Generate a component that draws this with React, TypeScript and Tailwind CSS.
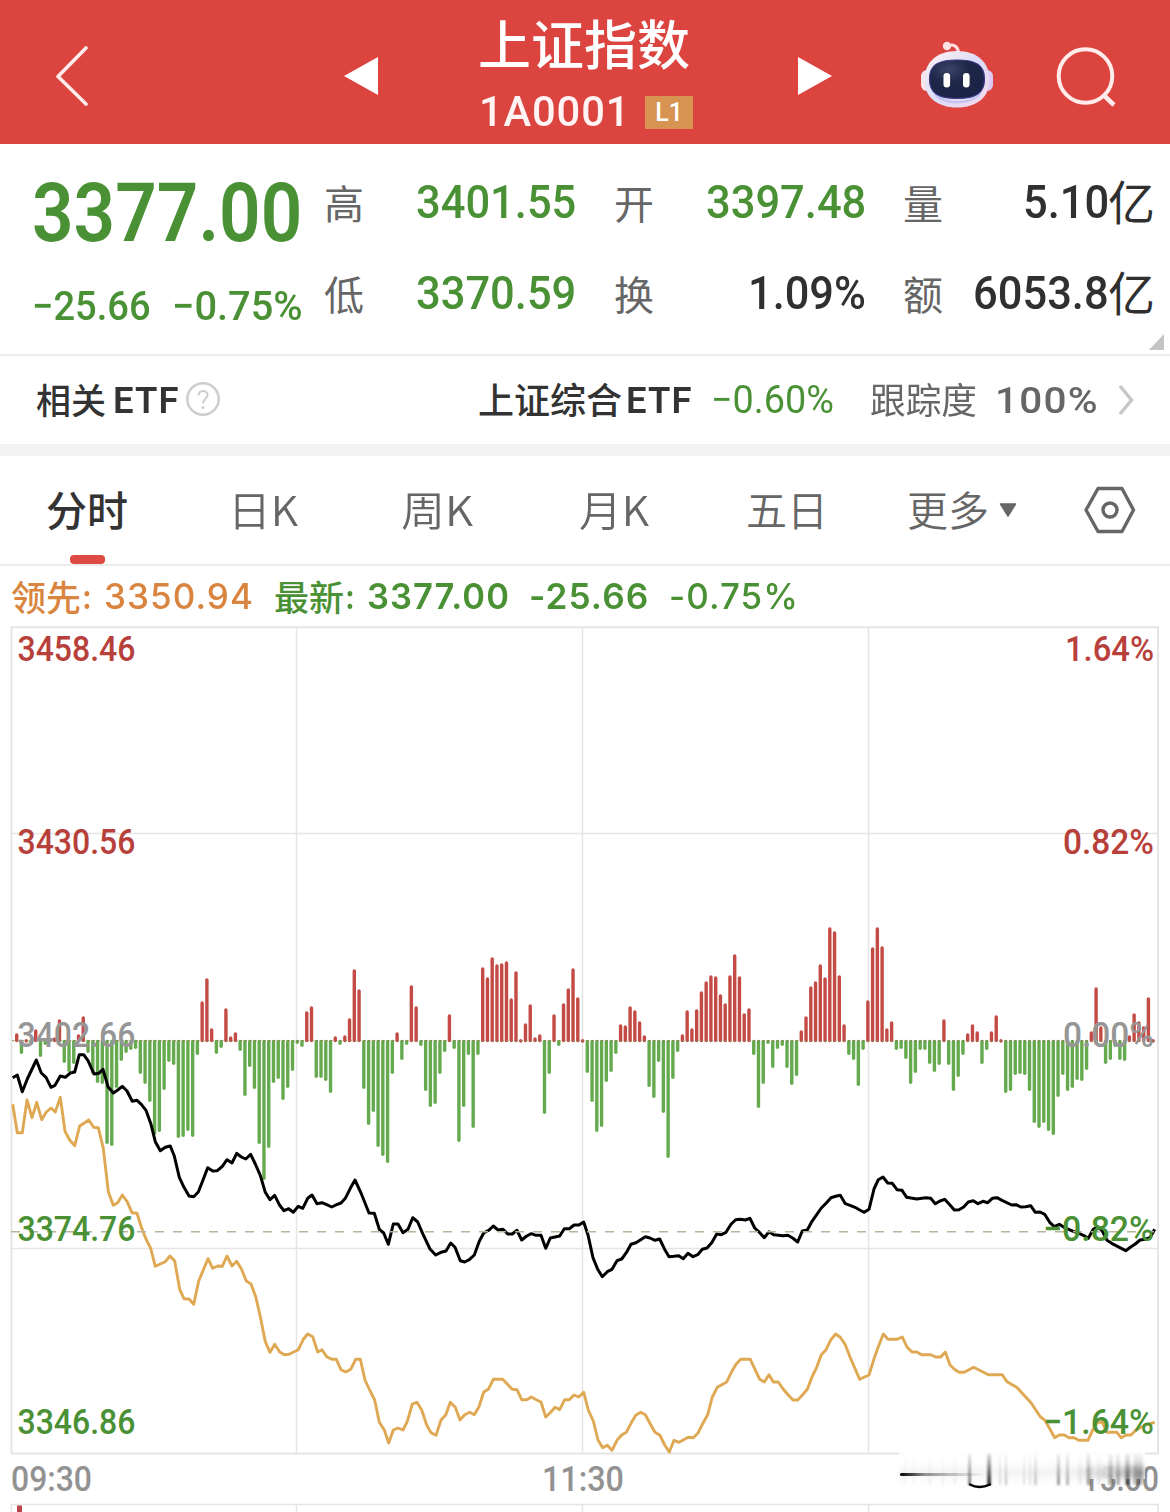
import { useLayoutEffect, useRef, useState } from "react";
import type { ReactNode } from "react";

const DIN = "font-['Roboto','Noto_Sans_CJK_SC',sans-serif]";
const CJK = "font-['Noto_Sans_CJK_SC',sans-serif]";
const SANS = "font-['Inter','Noto_Sans_CJK_SC',sans-serif]";

/** Text condensed or widened horizontally so that it takes exactly `w` pixels. */
function Fit({ w, className = "", children }: { w: number; className?: string; children: ReactNode }) {
  const ref = useRef<HTMLSpanElement>(null);
  const [scale, setScale] = useState(1);
  useLayoutEffect(() => {
    if (ref.current && ref.current.offsetWidth) setScale(w / ref.current.offsetWidth);
  }, [w]);
  return (
    <span className={`block shrink-0 whitespace-nowrap leading-none ${className}`} style={{ width: w }}>
      <span ref={ref} className="inline-block origin-left" style={{ transform: `scaleX(${scale})` }}>
        {children}
      </span>
    </span>
  );
}

/** Minute-by-minute strength bars, in pixels above (+) or below (-) the zero line. */
const BARS = [
  7, -13, 1, -2, 11, -16, -4, 2, 3, 21, -22, -31, -23, 6, 24, -12, -33, -42, -43, -103,
  -105, -47, -20, -12, -9, -8, -33, -43, -61, -94, -91, -49, -21, -24, -97, -96, -90, -96, -14, 39,
  62, 12, -13, -7, 32, 4, 8, -10, -55, -26, -48, -103, -139, -107, -42, -38, -59, -47, -30, -3,
  -6, 29, 34, -37, -37, -40, -52, 4, -4, 5, 22, 71, 51, -48, -84, -71, -106, -115, -122, -33,
  8, -19, -4, 55, 34, -5, -50, -66, -63, -33, -11, 26, -8, -101, -66, -14, -87, -14, 73, 63,
  83, 76, 77, 79, 42, 69, 1, 17, 36, 3, 6, -73, -33, 26, -5, 37, 52, 72, 43, 1,
  -32, -61, -91, -86, -41, -31, -13, 16, 15, 34, 30, 19, 5, -46, -57, -21, -72, -117, -38, -11,
  6, 30, 12, 31, 49, 59, 65, 64, 46, 37, 65, 86, 64, 27, 32, -14, -67, -43, -3, -27,
  -8, -5, -27, -44, -35, 10, 24, 54, 59, 76, 63, 113, 109, 65, 16, -14, -19, -45, -9, 40,
  93, 113, 94, 12, 19, -9, -8, -18, -43, -32, -9, -9, -23, -31, -24, 21, -24, -50, -36, -14,
  7, 16, 9, -23, -9, 9, 25, 1, -52, -50, -34, -33, -34, -50, -82, -87, -82, -90, -94, -56,
  -34, -50, -47, -39, -40, -29, 9, 53, 14, -23, -19, -6, -19, -20, 5, 27, 19, 14, 43, 1,
];

/** A run of a line: its origin in pixels, then points in thirds of a pixel. */
type Run = { x: number; y: number; pts: string };

const PRICE: Run[] = [
  {
    x: 0, y: 900,
    pts: "38,533 52,525 67,575 82,537 109,480 124,519 138,532 153,562 165,556 181,528 196,532 211,519 224,516 238,464 251,464 264,482 282,522 296,520 309,508 324,560 340,579 353,570 367,559 381,573 397,604 411,601 424,613 438,631 453,673 466,725 481,752 496,742 511,738 523,768 538,832 552,862 567,888 581,890 595,876 609,840 623,803 638,813 652,812 667,799 681,779 696,789 710,760 724,771 737,777 752,763 766,792 781,826 796,877 810,899 824,886 838,914 852,932 866,926 880,937",
  },
  {
    x: 290, y: 900,
    pts: "25,919 38,925 53,895 66,885 81,911 96,908 110,914 125,921 140,914 153,909 166,895 181,865 195,840 212,877 237,939 253,940 268,988 281,999 295,1033 310,972 324,972 339,998 354,988 368,953 383,966 398,1001 420,1047 437,1065 453,1057 468,1053 482,1029 495,1042 511,1082 524,1086 538,1079 553,1065 568,1024 581,999 596,991 610,978 624,990 639,988 653,1002 667,1002 681,991 695,1020 710,1008 724,1001 738,1006 753,1006 767,1045 781,1014 795,1011 809,1008 823,986 838,986 852,975 867,975",
  },
  {
    x: 580, y: 900,
    pts: "11,966 24,1005 39,1073 53,1108 67,1130 82,1115 96,1108 111,1082 125,1077 139,1058 153,1033 168,1028 182,1019 196,1010 210,1014 225,1021 239,1017 253,1046 267,1070 282,1069 296,1067 310,1076 324,1060 339,1070 353,1064 367,1048 381,1044 395,1028 410,1002 424,1004 438,997 453,973 467,959 481,958 496,960 510,955 524,984 539,998 553,1013 567,995 581,1004 610,1007 624,1006 639,1015 653,1026 667,993 682,990 696,964 710,944 724,924 739,909 753,893 767,889 781,886 796,911 810,916 825,922 839,930 853,937 867,928",
  },
  {
    x: 870, y: 900,
    pts: "12,867 25,839 39,831 53,849 67,850 81,869 96,871 110,892 140,897 167,893 182,895 196,911 210,903 224,898 239,914 253,930 267,929 281,921 295,906 310,902 324,911 339,904 353,908 367,895 381,893 396,901 425,915 438,914 452,921 467,920 482,917 496,937 510,936 524,943 539,967 553,980 568,973 582,982 610,994 625,999 640,1006 655,1015 670,988 683,980 697,993 711,1021 725,1030 767,1052 782,1041 796,1032 810,1020 825,1018 840,1013 854,988",
  },
];

const LEAD: Run[] = [
  {
    x: 0, y: 900,
    pts: "38,613 52,698 67,698 81,600 96,653 110,607 125,659 139,636 153,624 166,636 181,592 195,694 209,720 224,737 239,678 253,669 266,660 281,682 295,683 310,745 325,875 340,916 353,908 367,885 381,904 396,938 411,940 424,981",
  },
  {
    x: 0, y: 1200,
    pts: "438,117 452,145 466,199 496,185 510,168 524,183 539,268 552,296 567,297 581,313 596,243 624,176 638,205 653,198 667,199 681,168 696,198 710,184 724,206 739,243 753,252 767,290 781,350 796,425 810,457 824,433 839,456 853,464 867,463 895,449 910,418 923,402 938,410 953,456 966,449 980,470 995,478 1009,478 1023,509 1037,516 1052,508 1067,478 1081,478 1095,540 1109,570 1124,600 1138,667 1153,690",
  },
  {
    x: 380, y: 1260,
    pts: "26,549 40,510 54,504 69,510 82,484 97,432 111,427 125,450 140,495 153,518 168,526 183,480 197,465 211,427 226,442 240,480 254,464 269,457 283,464 297,440 311,396 325,388 340,358 368,358 397,388 411,389 425,419 440,419 454,411 469,419 483,426 497,471 512,457 525,442 539,449 554,419 568,419 582,405 596,411 611,397 625,450 640,483 654,540 668,563 682,556 696,571 711,541 725,525 739,517 753,490 767,466 782,457 796,464 811,492 825,517 840,526 854,555 868,576 882,541 897,547 925,532 940,533 954,519 968,491 983,464 997,411 1012,382 1040,366 1054,337 1068,313 1082,298 1111,298 1125,328 1139,358 1153,366 1167,344",
  },
  {
    x: 770, y: 1260,
    pts: "10,366 25,366 40,388 55,405 69,420 83,420 98,404 112,388 126,351 140,322 154,284 168,269 183,239 197,222 211,232 226,254 240,291 269,358 297,345 311,299 325,260 340,222 354,238 382,238 397,231 411,261 426,276 440,276 455,284 482,284 497,291 512,291 526,276 540,315 555,329 568,337 583,337 611,322 655,344 697,344 711,365 740,382 783,428 811,470 826,482 854,533 868,525 883,525 897,533 912,533 926,541 954,541 968,510 983,487 997,487 1011,517 1040,517 1054,533 1069,525 1083,525 1098,510 1126,495 1154,487",
  },
];

const toPoints = (runs: Run[]) =>
  runs
    .flatMap((r) =>
      r.pts.split(" ").map((p) => {
        const [px, py] = p.split(",").map(Number);
        return `${(r.x + px / 3).toFixed(1)},${(r.y + py / 3).toFixed(1)}`;
      }),
    )
    .join(" ");

function AxisLabel({ x, y, w, end, className, children }: { x: number; y: number; w: number; end?: boolean; className: string; children: string }) {
  return (
    <text
      x={end ? x - w : x}
      y={y}
      textLength={w}
      lengthAdjust="spacingAndGlyphs"
      className={`${DIN} text-[35.5px] font-medium ${className}`}
    >
      {children}
    </text>
  );
}

/** Faint vertical streaks of the smeared mark at the lower right: x, width, opacity. */
const STREAKS = [
  [905, 2, 0.04], [914, 2, 0.04], [930, 3, 0.05], [943, 2, 0.05], [955, 3, 0.05], [1000, 2, 0.14],
  [1006, 2, 0.25], [1024, 2, 0.12], [1030, 2, 0.12], [1035.5, 2, 0.3], [1058.5, 2.5, 0.5], [1067.5, 2.5, 0.35],
  [1080, 3, 0.08], [1088.5, 3.5, 0.4], [1099, 3, 0.08], [1110.5, 4, 0.35], [1118, 4, 0.3], [1127.5, 4.5, 0.5],
  [1138, 9, 0.3],
];

function Chart() {
  return (
    <svg width="1170" height="886" viewBox="0 626 1170 886" className="block">
      <defs>
        <linearGradient id="streak" x1="0" y1="0" x2="0" y2="1">
          <stop offset="0" stopColor="#000" stopOpacity="0.15" />
          <stop offset="1" stopColor="#000" stopOpacity="1" />
        </linearGradient>
        <linearGradient id="dash" x1="0" y1="0" x2="1" y2="0">
          <stop offset="0" stopColor="#000" />
          <stop offset="0.3" stopColor="#000" stopOpacity="0.4" />
          <stop offset="1" stopColor="#000" stopOpacity="0" />
        </linearGradient>
        <linearGradient id="haze" x1="0" y1="0" x2="1" y2="0">
          <stop offset="0" stopColor="#999" stopOpacity="0.12" />
          <stop offset="0.7" stopColor="#999" stopOpacity="0.15" />
          <stop offset="1" stopColor="#777" stopOpacity="0.75" />
        </linearGradient>
        <filter id="soft" x="-20%" y="-50%" width="140%" height="200%">
          <feGaussianBlur stdDeviation="0.8" />
        </filter>
        <filter id="softer" x="-20%" y="-100%" width="140%" height="300%">
          <feGaussianBlur stdDeviation="2 4" />
        </filter>
      </defs>

      <g fill="none" stroke="#e5e5e5" strokeWidth="1.5">
        <path d="M296.5 627V1453M582.5 627V1453M868.5 627V1453M11 833.5H1158M11 1248.5H1158" />
        <path d="M11.5 1512V1504.5H1158V1512M296.5 1504V1512M582.5 1504V1512M868.5 1504V1512" />
        <path d="M11.5 627.2H1158V1453.5H11.5Z" strokeWidth="2" />
      </g>

      <g strokeWidth="3.4" strokeLinecap="round">
        {BARS.map((v, i) => {
          const x = 16.7 + i * 4.755;
          return v > 0 ? (
            <line key={i} x1={x} x2={x} y1={1040.6} y2={1042 - v} stroke="#c44b45" />
          ) : (
            <line key={i} x1={x} x2={x} y1={1041.4} y2={1039.3 - v} stroke="#66aa4f" />
          );
        })}
      </g>
      <line x1="12" x2="1156" y1="1040.7" y2="1040.7" stroke="#8f7a50" strokeWidth="1.2" strokeDasharray="2.4 2.35" opacity="0.7" />

      <g fill="none" strokeLinejoin="round">
        <polyline points={toPoints(LEAD)} stroke="#dfa853" strokeWidth="2.9" />
        <polyline points={toPoints(PRICE)} stroke="#000" strokeWidth="3" />
      </g>
      <line x1="11" x2="1158" y1="1231.7" y2="1231.7" stroke="#b6b69a" strokeWidth="1.5" strokeDasharray="9 9" />

      <AxisLabel x={17.5} y={661} w={118} className="fill-[#b8403b]">3458.46</AxisLabel>
      <AxisLabel x={17.5} y={854} w={118} className="fill-[#b8403b]">3430.56</AxisLabel>
      <AxisLabel x={17.5} y={1047} w={118} className="fill-[#969696]">3402.66</AxisLabel>
      <AxisLabel x={17.5} y={1240.5} w={118} className="fill-[#4a9136]">3374.76</AxisLabel>
      <AxisLabel x={17.5} y={1434} w={118} className="fill-[#4a9136]">3346.86</AxisLabel>
      <AxisLabel end x={1154} y={661} w={89} className="fill-[#b8403b]">1.64%</AxisLabel>
      <AxisLabel end x={1154} y={854} w={91} className="fill-[#b8403b]">0.82%</AxisLabel>
      <AxisLabel end x={1154} y={1047} w={91} className="fill-[#969696]">0.00%</AxisLabel>
      <AxisLabel end x={1154} y={1240.5} w={111} className="fill-[#4a9136]">−0.82%</AxisLabel>
      <AxisLabel end x={1154} y={1434} w={111} className="fill-[#4a9136]">−1.64%</AxisLabel>
      <AxisLabel x={11} y={1490.5} w={81} className="fill-[#929292]">09:30</AxisLabel>
      <AxisLabel x={542} y={1490.5} w={82} className="fill-[#929292]">11:30</AxisLabel>
      <AxisLabel end x={1159} y={1490.5} w={77} className="fill-[#929292]">15:00</AxisLabel>

      <rect x="899" y="1450" width="246" height="29" fill="#fff" opacity="0.9" />
      <rect x="899" y="1468" width="246" height="9" fill="url(#haze)" filter="url(#softer)" />
      <g filter="url(#soft)">
        {STREAKS.map(([x, w, o]) => (
          <rect key={x} x={x - w / 2} y="1454" width={w} height="31" fill="url(#streak)" opacity={o} />
        ))}
        <rect x="968.3" y="1454" width="2.6" height="31" fill="url(#streak)" opacity="0.6" />
        <rect x="987.3" y="1454" width="3.6" height="31" fill="url(#streak)" opacity="0.9" />
      </g>
      <path d="M970 1484.5Q979 1489.5 990 1484.5" fill="none" stroke="#000" strokeWidth="2.4" strokeLinecap="round" />
      <rect x="900" y="1473" width="85" height="3" rx="1.5" fill="url(#dash)" />

      <rect x="17" y="1505.5" width="5" height="7" fill="#b8454a" />
    </svg>
  );
}

function Robot() {
  return (
    <svg width="74" height="70" viewBox="0 0 74 70" className="block">
      <defs>
        <linearGradient id="shell" x1="0" y1="0" x2="1" y2="1">
          <stop offset="0" stopColor="#fff3f3" />
          <stop offset="0.5" stopColor="#dcdcf8" />
          <stop offset="1" stopColor="#f6d9e8" />
        </linearGradient>
        <radialGradient id="visor" cx="0.35" cy="0.25" r="0.8">
          <stop offset="0" stopColor="#3d4468" />
          <stop offset="0.45" stopColor="#1e2748" />
          <stop offset="1" stopColor="#1a2345" />
        </radialGradient>
      </defs>
      <path d="M27 6.5C33 3 38 6 38.5 13" fill="none" stroke="#ffdde0" strokeWidth="3.2" strokeLinecap="round" />
      <circle cx="27" cy="6" r="4.2" fill="#ffe1e3" />
      <rect x="1" y="30" width="13" height="21" rx="6" fill="#fbe6ee" />
      <rect x="60" y="30" width="13" height="21" rx="6" fill="#dcc6f2" />
      <path d="M37 11C58 11 69.5 23 69.5 40C69.5 57 57 67.5 37 67.5C17 67.5 4.5 57 4.5 40C4.5 23 16 11 37 11Z" fill="url(#shell)" />
      <path d="M15 54C24 65 50 65 60 54" fill="none" stroke="#c6c4f4" strokeWidth="2.5" />
      <path d="M37 20C56 20 64.5 25 64.5 39C64.5 53 56 58.5 37 58.5C18 58.5 9.500 53 9.500 39C9.500 25 18 20 37 20Z" fill="url(#visor)" stroke="#3a3a86" strokeWidth="1.2" />
      <rect x="23.5" y="33" width="6.6" height="14.5" rx="3.3" fill="#fff" />
      <rect x="43" y="33" width="6.6" height="14.5" rx="3.3" fill="#fff" />
    </svg>
  );
}

function Header() {
  return (
    <header className="flex h-36 items-center bg-[#dc4440] text-white">
      <svg width="34" height="60" viewBox="0 0 34 60" className="ml-[55px] mt-2 shrink-0">
        <path d="M31 2L3 30.5L31 58" fill="none" stroke="#ffeceb" strokeWidth="3.6" strokeLinejoin="round" strokeLinecap="round" />
      </svg>
      <svg width="34" height="38" viewBox="0 0 34 38" className="ml-[255px] mt-2 shrink-0">
        <path d="M0 19L34 0V38Z" fill="#fff" />
      </svg>
      <div className="ml-[100px] flex w-[215px] shrink-0 flex-col pt-[5px]">
        <Fit w={212} className={`${CJK} text-[53px] font-medium`}>上证指数</Fit>
        <div className="mt-[22px] flex items-center">
          <Fit w={151} className={`${DIN} ml-px text-[42px] font-medium tracking-[0.02em] text-[#fff4f3]`}>1A0001</Fit>
          <span className={`ml-[15px] flex h-[33px] w-12 items-center justify-center bg-[#d69351] text-[25px] font-medium leading-none ${DIN}`}>L1</span>
        </div>
      </div>
      <svg width="34" height="38" viewBox="0 0 34 38" className="ml-[105px] mt-2 shrink-0">
        <path d="M34 19L0 0V38Z" fill="#fff" />
      </svg>
      <div className="ml-[88px] mt-1.5 shrink-0">
        <Robot />
      </div>
      <svg width="62" height="62" viewBox="0 0 62 62" className="ml-[62px] mt-3 shrink-0">
        <circle cx="29.5" cy="29" r="26.8" fill="none" stroke="#ffeceb" strokeWidth="4" />
        <path d="M47.5 48L58 58" stroke="#ffeceb" strokeWidth="4.5" />
      </svg>
    </header>
  );
}

function Stat({ label, w, dark, unit, children }: { label: string; w: number; dark?: boolean; unit?: string; children: string }) {
  return (
    <div className="flex h-[91px] items-center justify-between">
      <span className={`text-[40px] leading-none text-[#666] ${CJK}`}>{label}</span>
      <span className={`flex items-center ${dark ? "text-[#303030]" : "text-[#4a9136]"}`}>
        <Fit w={w} className={`${DIN} text-[47px] font-medium`}>{children}</Fit>
        {unit && <span className={`-ml-px pb-1 text-[47px] leading-none ${CJK}`}>{unit}</span>}
      </span>
    </div>
  );
}

function Quote() {
  return (
    <section className="relative flex h-[212px] border-b-2 border-[#ececec]">
      <div className="w-[324px] shrink-0 pl-8 pt-7 text-[#4a9136]">
        <Fit w={270} className={`${DIN} text-[82px] font-semibold`}>3377.00</Fit>
        <div className="mt-[32px] flex">
          <Fit w={119} className={`${DIN} text-[41px] font-medium`}>−25.66</Fit>
          <Fit w={131} className={`${DIN} ml-[21px] text-[41px] font-medium`}>−0.75%</Fit>
        </div>
      </div>
      <div className="w-[252px] shrink-0 pt-3">
        <Stat label="高" w={160}>3401.55</Stat>
        <Stat label="低" w={160}>3370.59</Stat>
      </div>
      <div className="ml-[38px] w-[252px] shrink-0 pt-3">
        <Stat label="开" w={160}>3397.48</Stat>
        <Stat label="换" w={118} dark>1.09%</Stat>
      </div>
      <div className="ml-[37px] w-[252px] shrink-0 pt-3">
        <Stat label="量" w={86} dark unit="亿">5.10</Stat>
        <Stat label="额" w={136} dark unit="亿">6053.8</Stat>
      </div>
      <svg width="15" height="16" viewBox="0 0 15 16" className="absolute bottom-1 right-[6px]">
        <path d="M15 0V16H0Z" fill="#c4c4c4" />
      </svg>
    </section>
  );
}

function EtfRow() {
  return (
    <section className="flex h-[88px] items-center text-[#333]">
      <Fit w={70} className={`${CJK} ml-9 pb-1 text-[35px] font-medium`}>相关</Fit>
      <Fit w={67} className={`${DIN} ml-[7px] text-[37px] font-semibold tracking-[0.03em]`}>ETF</Fit>
      <svg width="36" height="36" viewBox="0 0 36 36" className="mb-0.5 ml-[5px] shrink-0">
        <circle cx="18" cy="18" r="15.7" fill="none" stroke="#cdcdcd" strokeWidth="2.5" />
        <path d="M13.600 14.5C13.600 8.5 22.6 8.5 22.6 14C22.6 17.5 18 18 18 22.5" fill="none" stroke="#cdcdcd" strokeWidth="2" />
        <circle cx="18" cy="26.5" r="1.5" fill="#cdcdcd" />
      </svg>
      <Fit w={144} className={`${CJK} ml-[257px] pb-1 text-[36px] font-medium`}>上证综合</Fit>
      <Fit w={67} className={`${DIN} ml-1 text-[37px] font-semibold tracking-[0.03em]`}>ETF</Fit>
      <Fit w={123} className={`${DIN} ml-[18px] text-[39px] text-[#4a9136]`}>−0.60%</Fit>
      <Fit w={107} className={`${CJK} ml-9 pb-1 text-[36px] text-[#666]`}>跟踪度</Fit>
      <Fit w={104} className={`${DIN} ml-[18px] text-[37px] font-medium tracking-[0.03em] text-[#666]`}>100%</Fit>
      <svg width="16" height="32" viewBox="0 0 16 32" className="ml-[19px] shrink-0">
        <path d="M2 2L13.5 16L2 30" fill="none" stroke="#c6c6c6" strokeWidth="3.4" />
      </svg>
    </section>
  );
}

function Tab({ w, className, children }: { w: number; className: string; children: ReactNode }) {
  return <Fit w={w} className={`${CJK} pb-[3px] text-[41px] ${className}`}>{children}</Fit>;
}

function Tabs() {
  return (
    <nav className="relative flex h-[110px] items-center border-b-2 border-[#ececec] text-[#666]">
      <Tab w={82} className="ml-[46px] font-medium text-[#333]">分时</Tab>
      <Tab w={70} className="ml-[100px] font-[350]">日K</Tab>
      <Tab w={72} className="ml-[103px] font-[350]">周K</Tab>
      <Tab w={70} className="ml-[106px] font-[350]">月K</Tab>
      <Tab w={82} className="ml-[97px] font-[350]">五日</Tab>
      <Tab w={82} className="ml-[79px] font-[350]">更多</Tab>
      <svg width="18" height="15" viewBox="0 0 18 15" className="ml-[10px] shrink-0">
        <path d="M1.5 1H16.5L9 13Z" fill="#666" stroke="#666" strokeWidth="1.5" strokeLinejoin="round" />
      </svg>
      <svg width="52" height="48" viewBox="0 0 52 48" className="ml-[67px] shrink-0">
        <path d="M14 2.5H38L49.5 24L38 45.5H14L2 24Z" fill="none" stroke="#666" strokeWidth="3.4" strokeLinejoin="round" />
        <circle cx="26" cy="24" r="7" fill="none" stroke="#666" strokeWidth="3.4" />
      </svg>
      <span className="absolute bottom-0 left-[70px] h-[9px] w-[35px] rounded bg-[#dd4b42]" />
    </nav>
  );
}

function Legend() {
  return (
    <div className="flex h-[60px] items-center pt-0.5 text-[#4a9136]">
      <Fit w={70} className={`${CJK} ml-[11px] pb-1 text-[35px] font-medium text-[#d98540]`}>领先</Fit>
      <Fit w={10} className={`${SANS} ml-px text-[34px] font-semibold text-[#d98540]`}>:</Fit>
      <Fit w={150} className={`${SANS} ml-[12px] text-[35.5px] font-medium tracking-[0.03em] text-[#d98540]`}>3350.94</Fit>
      <Fit w={70} className={`${CJK} ml-[20px] pb-1 text-[35px] font-medium`}>最新</Fit>
      <Fit w={10} className={`${SANS} ml-px text-[34px] font-semibold`}>:</Fit>
      <Fit w={143} className={`${SANS} ml-[12px] text-[35.5px] font-semibold tracking-[0.03em]`}>3377.00</Fit>
      <Fit w={120} className={`${SANS} ml-[19px] text-[35.5px] font-semibold tracking-[0.03em]`}>-25.66</Fit>
      <Fit w={130} className={`${SANS} ml-[20px] text-[35.5px] font-medium tracking-[0.03em]`}>-0.75%</Fit>
    </div>
  );
}

export default function App() {
  return (
    <main className="h-[1512px] w-[1170px] overflow-hidden bg-white">
      <Header />
      <Quote />
      <EtfRow />
      <div className="h-3 bg-[#f3f3f3]" />
      <Tabs />
      <Legend />
      <Chart />
    </main>
  );
}
